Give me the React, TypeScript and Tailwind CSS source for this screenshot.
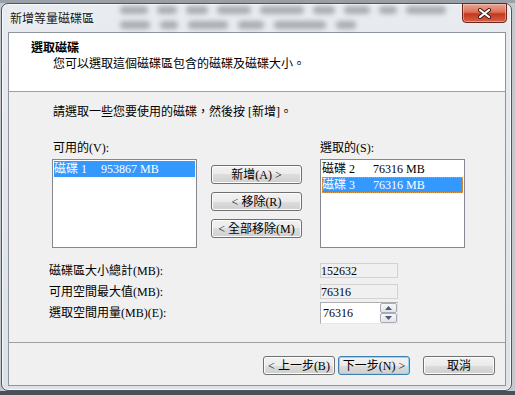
import type { ReactNode } from "react";

const btnBase =
  "flex items-center justify-center rounded-[3px] border text-[12px] leading-none text-black bg-[linear-gradient(#f2f2f2_0%,#ebebeb_50%,#dddddd_50%,#cfcfcf_100%)]";

function WinButton({
  children,
  className = "",
  isDefault = false,
}: {
  children: ReactNode;
  className?: string;
  isDefault?: boolean;
}) {
  return (
    <div
      className={`${btnBase} ${
        isDefault
          ? "border-[#3c7fb1] shadow-[inset_0_0_0_1px_#8fd6f7]"
          : "border-[#707070] shadow-[inset_0_0_0_1px_#fcfcfc]"
      } ${className}`}
    >
      {children}
    </div>
  );
}

// blurred text behind the glass title bar
const blobsTop = [28, 20, 22, 34, 44, 22, 26, 18, 40];
const blobsBottom = [30, 18, 40, 26, 52, 20];

function SpinArrow({ up }: { up?: boolean }) {
  return (
    <svg width="7" height="4" viewBox="0 0 7 4">
      <path d={up ? "M0 4 L3.5 0 L7 4 Z" : "M0 0 L3.5 4 L7 0 Z"} fill="#4a5d80" />
    </svg>
  );
}

export default function App() {
  return (
    <div className="w-[515px] h-[395px] overflow-hidden bg-[#c4c8cd] font-['Liberation_Serif','Noto_Sans_CJK_TC',serif] text-[12px] text-black">
      {/* top strip of the window behind */}
      <div className="h-[3px] bg-[#9aa0a7]" />

      {/* window */}
      <div className="ml-px w-[511px] h-[388px] rounded-[7px] border border-[#4f555d] bg-[linear-gradient(to_bottom,#e8ebef,#dde2e7)] shadow-[inset_0_0_0_1px_rgba(255,255,255,0.75)] flex flex-col">
        {/* title bar */}
        <div className="h-[28px] flex items-center">
          <div className="pl-[8px] text-[12px] leading-none text-[#151515] font-['Noto_Sans_CJK_TC',sans-serif] [text-shadow:0_0_6px_#ffffff]">
            新增等量磁碟區
          </div>
          <div className="ml-[26px] flex-1 flex flex-col gap-[7px] self-start pt-[2px] opacity-45">
            <div className="flex gap-[9px]">
              {blobsTop.map((w, i) => (
                <div key={i} className="h-[8px] rounded-sm bg-[#5d636b] blur-[2.5px]" style={{ width: w }} />
              ))}
            </div>
            <div className="flex gap-[10px]">
              {blobsBottom.map((w, i) => (
                <div key={i} className="h-[8px] rounded-sm bg-[#5d636b] blur-[2.5px]" style={{ width: w }} />
              ))}
            </div>
          </div>
          <div className="self-start -mt-px mr-[4px] ml-[8px] w-[45px] h-[20px] rounded-b-[4px] border border-[#6e2418] bg-[linear-gradient(#e9a795_0%,#dc7159_45%,#c6371c_55%,#d2624a_100%)] shadow-[inset_0_0_0_1px_rgba(255,210,190,0.5)] flex items-center justify-center">
            <svg width="13" height="11" viewBox="0 0 13 11">
              <path d="M2 2 L11 9 M11 2 L2 9" stroke="#3a1a14" strokeWidth="4" strokeLinecap="round" />
              <path d="M2 2 L11 9 M11 2 L2 9" stroke="#ffffff" strokeWidth="2.2" strokeLinecap="round" />
            </svg>
          </div>
        </div>

        {/* client area */}
        <div className="ml-[6px] w-[498px] h-[354px] border border-[#8e959d] bg-[#f0f0f0] flex flex-col">
          {/* header */}
          <div className="h-[59px] shrink-0 bg-white border-b border-[#a0a0a0] pl-[22px] pt-[7px] leading-[16px]">
            <div className="font-bold">選取磁碟</div>
            <div className="pl-[22px]">您可以選取這個磁碟區包含的磁碟及磁碟大小。</div>
          </div>

          {/* body */}
          <div className="h-[250px] shrink-0">
            <p className="pl-[44px] pt-[12px] leading-[16px]">請選取一些您要使用的磁碟，然後按 [新增]。</p>

            <div className="mt-[20px] pl-[43px] flex items-start">
              <div className="w-[145px]">
                <div className="pl-px leading-[16px]">可用的(V):</div>
                <div className="mt-[3px] h-[89px] border border-[#828790] bg-white p-px">
                  <div className="flex h-[16px] items-center bg-[#3399ff] text-white leading-none">
                    <span className="w-[47px]">磁碟 1</span>
                    <span>953867 MB</span>
                  </div>
                </div>
              </div>

              <div className="ml-[14px] w-[91px] pt-[25px] flex flex-col gap-[8px]">
                <WinButton className="h-[19px]">新增(A) &gt;</WinButton>
                <WinButton className="h-[19px]">&lt; 移除(R)</WinButton>
                <WinButton className="h-[19px]">&lt; 全部移除(M)</WinButton>
              </div>

              <div className="ml-[18px] w-[145px]">
                <div className="leading-[16px]">選取的(S):</div>
                <div className="mt-[3px] h-[89px] border border-[#828790] bg-white p-px">
                  <div className="flex h-[16px] items-center leading-none">
                    <span className="w-[51px]">磁碟 2</span>
                    <span>76316 MB</span>
                  </div>
                  <div className="flex h-[16px] items-center bg-[#3399ff] text-white leading-none outline-1 outline-dotted outline-[#e29a45] -outline-offset-1">
                    <span className="w-[51px]">磁碟 3</span>
                    <span>76316 MB</span>
                  </div>
                </div>
              </div>
            </div>

            <div className="mt-[15px] pl-[40px]">
              <div className="flex h-[15px] items-center">
                <div className="w-[271px] leading-none">磁碟區大小總計(MB):</div>
                <div className="w-[78px] h-[15px] border border-[#d2d2d2] bg-[#f0f0f0] flex items-center text-[12px] leading-none text-black">
                  152632
                </div>
              </div>
              <div className="mt-[6px] flex h-[15px] items-center">
                <div className="w-[271px] leading-none">可用空間最大值(MB):</div>
                <div className="w-[78px] h-[15px] border border-[#d2d2d2] bg-[#f0f0f0] flex items-center text-[12px] leading-none text-black">
                  76316
                </div>
              </div>
              <div className="mt-[3px] flex h-[22px] items-center">
                <div className="w-[271px] leading-none">選取空間用量(MB)(E):</div>
                <div className="w-[78px] h-[22px] border border-[#abadb3] border-r-[#dbdfe6] border-b-[#e3e9ef] bg-white flex">
                  <div className="flex-1 pl-[2px] flex items-center text-[12px] leading-none text-black">76316</div>
                  <div className="w-[17px] flex flex-col">
                    <div className="h-[10px] border border-[#a7acb3] rounded-[2px] bg-[linear-gradient(#f7f7f7,#e2e4e7)] flex items-center justify-center">
                      <SpinArrow up />
                    </div>
                    <div className="h-[10px] border border-[#a7acb3] rounded-[2px] bg-[linear-gradient(#f7f7f7,#e2e4e7)] flex items-center justify-center">
                      <SpinArrow />
                    </div>
                  </div>
                </div>
              </div>
            </div>
          </div>

          {/* footer */}
          <div className="flex-1 border-t border-[#a0a0a0] flex justify-end items-start pt-[13px] pr-[10px]">
            <WinButton className="w-[72px] h-[19px]">&lt; 上一步(B)</WinButton>
            <WinButton isDefault className="ml-[3px] w-[72px] h-[19px]">
              下一步(N) &gt;
            </WinButton>
            <WinButton className="ml-[13px] w-[72px] h-[19px]">取消</WinButton>
          </div>
        </div>
      </div>

      {/* bottom strip */}
      <div className="h-[4px] bg-[#4b5058]" />
    </div>
  );
}
